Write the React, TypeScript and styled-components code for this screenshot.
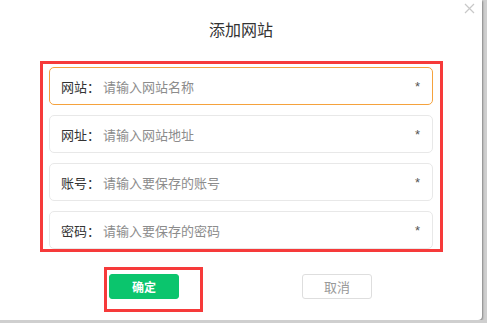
import React from "react";
import styled, { createGlobalStyle } from "styled-components";

const GlobalStyle = createGlobalStyle`
  html, body {
    margin: 0;
    padding: 0;
    background: #cfcfcf;
  }
  body {
    font-family: "Liberation Sans", "Noto Sans CJK SC", sans-serif;
  }
`;

const Dialog = styled.div`
  position: relative;
  box-sizing: border-box;
  width: 482px;
  height: 320px;
  background: #fff;
  border-radius: 0 0 4px 0;
  box-shadow: 1px 1px 2px rgba(0, 0, 0, 0.35);
  padding-top: 21px;
`;

const Close = styled.button`
  position: absolute;
  top: 3px;
  right: 7px;
  width: 11px;
  height: 11px;
  padding: 0;
  border: none;
  background: transparent;
  cursor: pointer;
  svg {
    display: block;
  }
`;

const Title = styled.h3`
  margin: 0;
  font-size: 16px;
  line-height: 20px;
  font-weight: 400;
  color: #333;
  text-align: center;
`;

const Form = styled.div`
  box-sizing: border-box;
  margin: 20px 0 0 40px;
  width: 403px;
  border: 3px solid #f63a3a;
  padding: 3px 7px 0 6px;
  display: flex;
  flex-direction: column;
  gap: 10px;
`;

const Row = styled.label<{ $focused?: boolean }>`
  box-sizing: border-box;
  height: 38px;
  display: flex;
  align-items: center;
  padding: 0 12px 0 11px;
  border: 1px solid ${(p) => (p.$focused ? "#f5a23d" : "#e8e8e8")};
  border-radius: 5px;
  font-family: "Noto Sans CJK SC", sans-serif;
  font-size: 13px;
  color: #333;
`;

const Label = styled.span`
  width: 42px;
  flex: none;
`;

const Input = styled.input`
  flex: 1;
  min-width: 0;
  border: none;
  outline: none;
  padding: 0;
  font: inherit;
  color: #333;
  background: transparent;
  &::placeholder {
    color: #8c8c8c;
  }
`;

const Star = styled.span`
  font-family: "Liberation Sans", sans-serif;
  font-size: 13px;
  line-height: 13px;
  color: #555;
`;

const Footer = styled.div`
  display: flex;
  align-items: flex-start;
  gap: 99px;
  margin-top: 15px;
  padding-left: 104px;
`;

const Highlight = styled.div`
  box-sizing: border-box;
  width: 99px;
  height: 45px;
  border: 3px solid #f63a3a;
  padding: 4px 0 0 2px;
`;

const Button = styled.button<{ $primary?: boolean }>`
  box-sizing: border-box;
  width: 70px;
  height: 25px;
  margin-top: ${(p) => (p.$primary ? 0 : "7px")};
  border-radius: 3px;
  border: 1px solid ${(p) => (p.$primary ? "#0bc56d" : "#dedede")};
  background: ${(p) => (p.$primary ? "#0bc56d" : "#fff")};
  color: ${(p) => (p.$primary ? "#fff" : "#999")};
  font-family: "Noto Sans CJK SC", sans-serif;
  font-size: ${(p) => (p.$primary ? "12px" : "13px")};
  font-weight: ${(p) => (p.$primary ? 700 : 400)};
  padding: 0;
  cursor: pointer;
`;

const fields = [
  { label: "网站：", placeholder: "请输入网站名称" },
  { label: "网址：", placeholder: "请输入网站地址" },
  { label: "账号：", placeholder: "请输入要保存的账号" },
  { label: "密码：", placeholder: "请输入要保存的密码" },
];

export default function App() {
  return (
    <>
      <GlobalStyle />
      <Dialog>
        <Close aria-label="close">
          <svg width="11" height="11" viewBox="0 0 11 11">
            <path d="M1 1L10 10M10 1L1 10" stroke="#c8c8c8" strokeWidth="1.2" />
          </svg>
        </Close>
        <Title>添加网站</Title>
        <Form>
          {fields.map((f, i) => (
            <Row key={f.label} $focused={i === 0}>
              <Label>{f.label}</Label>
              <Input placeholder={f.placeholder} />
              <Star>*</Star>
            </Row>
          ))}
        </Form>
        <Footer>
          <Highlight>
            <Button $primary>确定</Button>
          </Highlight>
          <Button>取消</Button>
        </Footer>
      </Dialog>
    </>
  );
}
